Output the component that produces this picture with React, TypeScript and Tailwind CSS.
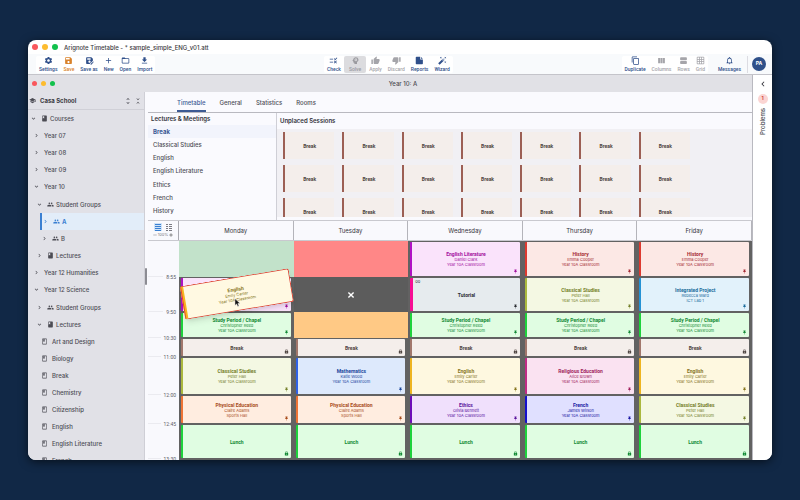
import React, { useState } from "react";
import clsx from "clsx";
import {
  MdAdd,
  MdAutoFixHigh,
  MdBook,
  MdChevronLeft,
  MdChevronRight,
  MdContentCopy,
  MdExpandMore,
  MdFileDownload,
  MdFolderOpen,
  MdGridOn,
  MdGroup,
  MdLock,
  MdNotificationsNone,
  MdOutlineBook,
  MdPsychology,
  MdPushPin,
  MdRemove,
  MdRule,
  MdSave,
  MdSaveAs,
  MdSchool,
  MdSettings,
  MdThumbDown,
  MdThumbUp,
  MdUnfoldLess,
  MdUnfoldMore,
  MdViewAgenda,
  MdViewColumn,
} from "react-icons/md";

type Icon = React.ComponentType<{ className?: string }>;

const ReportIcon: Icon = ({ className }) => (
  <svg viewBox="0 0 24 24" fill="currentColor" className={className}>
    <path d="M4 2h10v7h7v11a2 2 0 0 1-2 2H4a2 2 0 0 1-2-2V4a2 2 0 0 1 2-2z" />
    <path d="M16 2.5 20.8 7.3H16z" />
  </svg>
);

const LinesIcon: Icon = ({ className }) => (
  <svg viewBox="0 0 8 8" fill="currentColor" className={className}>
    <path d="M1 1h6v1H1zM1 3h6v1H1zM1 5h6v1H1zM1 7h6v1H1z" />
  </svg>
);

const SplitLinesIcon: Icon = ({ className }) => (
  <svg viewBox="0 0 8 8" fill="currentColor" className={className}>
    <path d="M1 1h2v1H1zM1 3h2v1H1zM1 5h2v1H1zM1 7h2v1H1zM4 1h3v1H4zM4 3h3v1H4zM4 5h3v1H4zM4 7h3v1H4z" />
  </svg>
);

interface Tool {
  label: string;
  icon: Icon;
  state?: "accent" | "disabled" | "pressed";
}

const fileTools: Tool[] = [
  { label: "Settings", icon: MdSettings },
  { label: "Save", icon: MdSave, state: "accent" },
  { label: "Save as", icon: MdSaveAs },
  { label: "New", icon: MdAdd },
  { label: "Open", icon: MdFolderOpen },
  { label: "Import", icon: MdFileDownload },
];

const solveTools: Tool[] = [
  { label: "Check", icon: MdRule },
  { label: "Solve", icon: MdPsychology, state: "pressed" },
  { label: "Apply", icon: MdThumbUp, state: "disabled" },
  { label: "Discard", icon: MdThumbDown, state: "disabled" },
  { label: "Reports", icon: ReportIcon },
  { label: "Wizard", icon: MdAutoFixHigh },
];

const viewTools: Tool[] = [
  { label: "Duplicate", icon: MdContentCopy },
  { label: "Columns", icon: MdViewColumn, state: "disabled" },
  { label: "Rows", icon: MdViewAgenda, state: "disabled" },
  { label: "Grid", icon: MdGridOn, state: "disabled" },
];

interface TreeNode {
  label: string;
  kind: "root" | "year" | "group" | "class" | "leaf";
  open?: boolean;
  icon?: Icon;
  selected?: boolean;
}

const tree: TreeNode[] = [
  { label: "Courses", kind: "root", open: true, icon: MdBook },
  { label: "Year 07", kind: "year" },
  { label: "Year 08", kind: "year" },
  { label: "Year 09", kind: "year" },
  { label: "Year 10", kind: "year", open: true },
  { label: "Student Groups", kind: "group", open: true, icon: MdGroup },
  { label: "A", kind: "class", icon: MdGroup, selected: true },
  { label: "B", kind: "class", icon: MdGroup },
  { label: "Lectures", kind: "group", icon: MdBook },
  { label: "Year 12 Humanities", kind: "year" },
  { label: "Year 12 Science", kind: "year", open: true },
  { label: "Student Groups", kind: "group", icon: MdGroup },
  { label: "Lectures", kind: "group", open: true, icon: MdBook },
  { label: "Art and Design", kind: "leaf", icon: MdOutlineBook },
  { label: "Biology", kind: "leaf", icon: MdOutlineBook },
  { label: "Break", kind: "leaf", icon: MdOutlineBook },
  { label: "Chemistry", kind: "leaf", icon: MdOutlineBook },
  { label: "Citizenship", kind: "leaf", icon: MdOutlineBook },
  { label: "English", kind: "leaf", icon: MdOutlineBook },
  { label: "English Literature", kind: "leaf", icon: MdOutlineBook },
  { label: "French", kind: "leaf", icon: MdOutlineBook },
];

const indent = {
  root: "pl-[2px]",
  year: "pl-[5px]",
  group: "pl-[8px]",
  class: "pl-[13px]",
  leaf: "pl-[13px]",
};

const lectures = ["Break", "Classical Studies", "English", "English Literature", "Ethics", "French", "History"];

const themes = {
  pink: "bg-[#fae3fb] border-[#b012c4] text-[#a3109f]",
  gray: "bg-[#e6ebee] border-[#f70d94] text-[#2b2e33]",
  green: "bg-[#e0fde2] border-[#1ed23c] text-[#128a35]",
  beige: "bg-[#f4eeeb] border-[#a1776c] text-[#4f4542]",
  olive: "bg-[#f4f8e3] border-[#aab83e] text-[#75802a]",
  blue: "bg-[#dde9fc] border-[#2f62e8] text-[#1b479c]",
  orange: "bg-[#ffede0] border-[#ee7436] text-[#a84c1b]",
  yellow: "bg-[#fef8e0] border-[#eeb420] text-[#86741c]",
  purple: "bg-[#f0e0fc] border-[#6d0db8] text-[#5a139c]",
  red: "bg-[#fce8e5] border-[#dd3a30] text-[#a52a34]",
  sky: "bg-[#e2f2fb] border-[#2492d4] text-[#1c6d9d]",
  magenta: "bg-[#fae2f1] border-[#c02c86] text-[#a01f5c]",
  indigo: "bg-[#e0e0ff] border-[#1510cc] text-[#1b18a4]",
};

interface Session {
  title: string;
  teacher?: string;
  room?: string;
  theme: keyof typeof themes;
  lock?: boolean;
  tag?: string;
}

// a slot is either a session or a drop hint shown while dragging
type Slot = Session | "ok" | "clash" | "blocked" | "warn";

const room = "Year 10A Classroom";
const lunch: Session = { title: "Lunch", theme: "green", lock: true };
const pause: Session = { title: "Break", theme: "beige", lock: true };
const study: Session = { title: "Study Period / Chapel", teacher: "Christopher Reed", room, theme: "green" };
const history: Session = { title: "History", teacher: "Emma Cooper", room, theme: "red" };
const classical: Session = { title: "Classical Studies", teacher: "Peter Hall", room, theme: "olive" };
const english: Session = { title: "English", teacher: "Emily Carter", room, theme: "yellow" };
const pe: Session = { title: "Physical Education", teacher: "Claire Adams", room: "Sports Hall", theme: "orange" };

const days: { name: string; slots: Slot[] }[] = [
  {
    name: "Monday",
    slots: ["ok", { title: "", theme: "pink" }, study, pause, classical, pe, lunch],
  },
  {
    name: "Tuesday",
    slots: [
      "clash",
      "blocked",
      "warn",
      pause,
      { title: "Mathematics", teacher: "Katie Wood", room, theme: "blue" },
      pe,
      lunch,
    ],
  },
  {
    name: "Wednesday",
    slots: [
      { title: "English Literature", teacher: "Daniel Clark", room, theme: "pink" },
      { title: "Tutorial", theme: "gray", tag: "00" },
      study,
      pause,
      english,
      { title: "Ethics", teacher: "Olivia Bennett", room, theme: "purple" },
      lunch,
    ],
  },
  {
    name: "Thursday",
    slots: [
      history,
      classical,
      study,
      pause,
      { title: "Religious Education", teacher: "Alice Brown", room, theme: "magenta" },
      { title: "French", teacher: "James Wilson", room, theme: "indigo" },
      lunch,
    ],
  },
  {
    name: "Friday",
    slots: [
      history,
      { title: "Integrated Project", teacher: "Rebecca Ward", room: "ICT Lab 1", theme: "sky" },
      study,
      pause,
      english,
      classical,
      lunch,
    ],
  },
];

const times = ["8:55", "9:50", "10:30", "11:00", "12:00", "12:45", "13:30"];

const slotRows = "grid grid-rows-[36px_35px_26px_19px_38px_29px_35px]";

const hints = {
  ok: "bg-[#c2e2ca]",
  clash: "bg-[#ff8787]",
  blocked: "bg-[#5c5c5c]",
  warn: "bg-[#ffc985]",
};

const Lights = ({ small }: { small?: boolean }) => (
  <div className="flex gap-[4px]">
    {["bg-[#f9575c]", "bg-[#fdbc2e]", "bg-[#12c14c]"].map((c) => (
      <span key={c} className={clsx("rounded-full", c, small ? "size-[5px]" : "size-[6px]")} />
    ))}
  </div>
);

const ToolButton = ({ tool }: { tool: Tool }) => {
  const Icon = tool.icon;
  return (
    <button
      type="button"
      disabled={tool.state === "disabled"}
      className={clsx(
        "flex h-[17px] flex-col items-center justify-center rounded-[2px] font-['Roboto',sans-serif] text-[5px] leading-[6px] font-medium",
        tool.state === "pressed" ? "bg-[#dcdcdf] px-[5px] text-[#9a9a9f]" : "px-[3px]",
        tool.state === "accent" && "text-[#d9822b]",
        tool.state === "disabled" && "text-[#a5a5aa]",
        !tool.state && "text-[#2f4f8a]",
      )}
    >
      <Icon className="mb-px size-[9px]" />
      {tool.label}
    </button>
  );
};

const ToolGroup = ({ tools }: { tools: Tool[] }) => (
  <div className="flex rounded-[2px] bg-white">
    {tools.map((t) => (
      <ToolButton key={t.label} tool={t} />
    ))}
  </div>
);

const Sidebar = () => (
  <aside className="flex w-[117px] shrink-0 flex-col overflow-hidden border-r border-[#cfcfd6] bg-[#e1e1e7] text-[6px] font-medium text-[#4c4c54]">
    <div className="flex h-[18px] shrink-0 items-center border-b border-[#d0d0d7] pr-[2px] pl-px">
      <MdSchool className="size-[7px]" />
      <h1 className="ml-[4px] flex-1 font-bold text-[#3a3a42]">Casa School</h1>
      <button type="button" aria-label="Expand all" className="mr-[2px]">
        <MdUnfoldMore className="size-[8px]" />
      </button>
      <button type="button" aria-label="Collapse all">
        <MdUnfoldLess className="size-[8px]" />
      </button>
    </div>
    <nav className="flex flex-col">
      {tree.map((n, i) => {
        const Chevron = n.open ? MdExpandMore : MdChevronRight;
        return (
          <button
            type="button"
            key={i}
            className={clsx(
              "flex h-[17px] shrink-0 items-center text-left",
              n.kind === "year" && n.open && "mb-px",
              n.selected
                ? "ml-[12px] border-l-2 border-[#3a80d2] bg-[#e2edf9] font-bold text-[#3a80d2]"
                : indent[n.kind],
            )}
          >
            {n.kind !== "leaf" && <Chevron className="size-[7px]" />}
            {n.icon && (
              <n.icon className={clsx("size-[7px]", n.kind === "leaf" ? "mr-[4px]" : "mr-[2px] ml-[4px]")} />
            )}
            <span className={clsx(n.kind === "year" && "ml-[4px]")}>{n.label}</span>
          </button>
        );
      })}
    </nav>
  </aside>
);

const SessionText = ({ s }: { s: Session }) => (
  <>
    {s.title && <span className="font-['Roboto',sans-serif] text-[5px] leading-[6px] font-bold">{s.title}</span>}
    {s.teacher && <span className="text-[4px] leading-[5px]">{s.teacher}</span>}
    {s.room && <span className="text-[4px] leading-[5px]">{s.room}</span>}
  </>
);

const SlotCell = ({ slot }: { slot: Slot }) => {
  if (typeof slot === "string") {
    return (
      <div className={clsx("flex items-center justify-center text-white", hints[slot])}>
        {slot === "blocked" && (
          <svg viewBox="0 0 8 8" className="size-[8px]">
            <path d="M1.4 1.4l5.2 5.2M6.6 1.4L1.4 6.6" stroke="currentColor" strokeWidth="1.4" />
          </svg>
        )}
      </div>
    );
  }
  const Mark = slot.lock ? MdLock : MdPushPin;
  return (
    <div className="flex py-px pr-[3px] pl-[2px]">
      <div
        className={clsx(
          "relative flex flex-1 flex-col items-center justify-center overflow-hidden rounded-[1px] text-center",
          themes[slot.theme],
          slot.tag ? "border-l-3" : "border-l-2",
        )}
      >
        {slot.tag && <span className="absolute top-px left-[2px] text-[4px] leading-[5px]">{slot.tag}</span>}
        <SessionText s={slot} />
        <Mark className="absolute right-[2px] bottom-[2px] size-[5px]" />
      </div>
    </div>
  );
};

const DraggedSession = () => (
  <div className="absolute top-[36px] left-[3px] z-10 flex h-[34px] w-[110px] -rotate-[9.5deg] flex-col items-center justify-center rounded-[2px] border border-l-0 border-[#dd4b3c] bg-[#fff9e2] text-[#86741c] shadow-md">
    <span className="absolute inset-y-0 left-0 w-[3px] border-l border-[#e8452c] bg-[#f6b51e]" />
    <SessionText s={english} />
    <svg viewBox="0 0 12 18" className="absolute top-[20px] left-[51px] h-[9px] w-[6px] rotate-[9.5deg]">
      <path d="M1 1v14l3.4-3.2L6.6 17l2.6-1.1L7 10.8h4.5z" fill="#111" stroke="#fff" strokeWidth="1" />
    </svg>
  </div>
);

const Timetable = () => (
  <section className="flex flex-1 flex-col overflow-hidden">
    <div className="flex h-[21px] shrink-0 border-y border-[#c9c9cf] bg-[#f9f9fd]">
      <div className="flex w-[31px] shrink-0 flex-col items-center justify-center border-r border-[#a9a9b0] text-[#7b7b83]">
        <div className="flex gap-[3px]">
          <button type="button" aria-label="Rows view" className="bg-[#cfe3f8] text-[#3a80d2]">
            <LinesIcon className="size-[8px]" />
          </button>
          <button type="button" aria-label="Compact view">
            <SplitLinesIcon className="size-[8px]" />
          </button>
        </div>
        <div className="mt-px flex items-center text-[4px] leading-[6px]">
          <button type="button" aria-label="Zoom out">
            <MdRemove className="size-[6px]" />
          </button>
          100%
          <button type="button" aria-label="Zoom in">
            <MdAdd className="size-[6px] text-[#333]" />
          </button>
        </div>
      </div>
      <div className="grid flex-1 grid-cols-5">
        {days.map((d) => (
          <div
            key={d.name}
            className="flex items-center justify-center border-r border-[#b4b4ba] text-[6px] text-[#33333a]"
          >
            {d.name}
          </div>
        ))}
      </div>
    </div>
    <div className="flex flex-1">
      <div className={clsx("w-[31px] shrink-0 bg-[#f9f9fd]", slotRows)}>
        {times.map((t) => (
          <div key={t} className="flex items-end justify-end pr-[3px]">
            <span className="mr-[3px] h-px flex-1 bg-[#ebebf0]" />
            <time className="-mb-[3px] font-['Roboto',sans-serif] text-[5px] leading-[6px] text-[#5c5c64]">{t}</time>
          </div>
        ))}
      </div>
      <div className="relative grid flex-1 grid-cols-5 bg-[#626262]">
        {days.map((d) => (
          <div key={d.name} className={slotRows}>
            {d.slots.map((s, i) => (
              <SlotCell key={i} slot={s} />
            ))}
          </div>
        ))}
        <DraggedSession />
      </div>
    </div>
  </section>
);

export default function App() {
  const [tab, setTab] = useState("Timetable");
  const [lecture, setLecture] = useState("Break");

  return (
    <div className="flex h-screen bg-[#112846] px-[28px] py-[40px] font-['Inter',sans-serif]">
      <div className="flex flex-1 flex-col overflow-hidden rounded-[8px] bg-white shadow-[0_2px_10px_rgba(0,0,0,0.6)]">
        <header className="flex h-[14px] shrink-0 items-center gap-[6px] px-[4px] text-[6px] font-medium text-[#3a3a40]">
          <Lights />
          Arignote Timetable - * sample_simple_ENG_v01.att
        </header>

        <div className="flex h-[21px] shrink-0 items-center justify-between border-b border-[#c4c4ca] bg-[#f8fafc] pr-[6px] pl-[8px]">
          <ToolGroup tools={fileTools} />
          <ToolGroup tools={solveTools} />
          <div className="flex items-center">
            <ToolGroup tools={viewTools} />
            <div className="mr-[4px] ml-[7px] border-r border-[#dcdce2] pr-[3px]">
              <ToolButton tool={{ label: "Messages", icon: MdNotificationsNone }} />
            </div>
            <button
              type="button"
              className="flex size-[14px] items-center justify-center rounded-full bg-[#2f5089] text-[5px] font-bold text-white"
            >
              PA
            </button>
          </div>
        </div>

        <div className="flex min-h-0 flex-1">
          <div className="flex min-w-0 flex-1 flex-col border-r border-[#b9b9c0]">
            <div className="grid h-[17px] shrink-0 grid-cols-3 items-center bg-[#e1e1e6] px-[4px]">
              <Lights small />
              <h2 className="pl-[26px] text-center text-[6px] font-medium text-[#4a4a50]">Year 10: A</h2>
            </div>

            <div className="flex min-h-0 flex-1">
              <Sidebar />
              <div className="relative flex min-w-0 flex-1 flex-col bg-[#fafafe] pl-[3px]">
                <span className="absolute top-[176px] left-0 h-[17px] w-[2px] rounded-full bg-[#8c8c93]" />
                <div role="tablist" className="flex h-[21px] shrink-0 gap-[14px] border-b border-[#b9b9c0] pl-[29px]">
                  {["Timetable", "General", "Statistics", "Rooms"].map((t) => (
                    <button
                      type="button"
                      role="tab"
                      aria-selected={tab === t}
                      key={t}
                      onClick={() => setTab(t)}
                      className={clsx(
                        "border-b-2 pt-[2px] text-[6px] font-medium",
                        tab === t ? "border-[#3c5a94] text-[#3c5a94]" : "border-transparent text-[#4c4c54]",
                      )}
                    >
                      {t}
                    </button>
                  ))}
                </div>

                <div className="flex h-[107px] shrink-0">
                  <div className="flex w-[129px] shrink-0 flex-col border-r border-[#cfcfd6]">
                    <h3 className="h-[12px] pl-[3px] text-[6px] leading-[12px] font-semibold text-[#33333a]">
                      Lectures &amp; Meetings
                    </h3>
                    <div className="grid h-[93px] grid-rows-7">
                      {lectures.map((l) => (
                        <button
                          type="button"
                          key={l}
                          onClick={() => setLecture(l)}
                          className={clsx(
                            "pl-[5px] text-left text-[6px] leading-[12px]",
                            lecture === l ? "bg-[#f2f4fc] font-bold text-[#3c5a94]" : "font-medium text-[#4c4c54]",
                          )}
                        >
                          {l}
                        </button>
                      ))}
                    </div>
                  </div>

                  <div className="flex min-w-0 flex-1 flex-col">
                    <h3 className="h-[16px] pl-[3px] text-[6px] leading-[16px] font-semibold text-[#33333a]">
                      Unplaced Sessions
                    </h3>
                    <div className="grid h-[88px] auto-rows-[27px] grid-cols-7 gap-y-[6px] overflow-hidden bg-[#f1f0f4] pt-[3px] pr-[54px] pl-[6px]">
                      {Array.from({ length: 21 }, (_, i) => (
                        <div
                          key={i}
                          className="mr-[8px] flex items-center justify-center border-l-2 border-[#9c5f54] bg-[#f4eeeb] font-['Roboto',sans-serif] text-[5px] leading-[6px] font-bold text-[#4f4542]"
                        >
                          Break
                        </div>
                      ))}
                    </div>
                  </div>
                </div>

                <Timetable />
              </div>
            </div>
          </div>

          <aside className="flex w-[19px] shrink-0 flex-col items-center bg-white pt-[4px]">
            <button type="button" aria-label="Open problems panel" className="text-[#33333a]">
              <MdChevronLeft className="size-[10px]" />
            </button>
            <span className="mt-[5px] flex size-[10px] items-center justify-center rounded-full bg-[#fbd5d3] text-[5px] font-bold text-[#d2463f]">
              1
            </span>
            <span className="mt-[4px] rotate-180 text-[6px] leading-[8px] font-medium text-[#4c4c54] [writing-mode:vertical-rl]">
              Problems
            </span>
          </aside>
        </div>
      </div>
    </div>
  );
}
